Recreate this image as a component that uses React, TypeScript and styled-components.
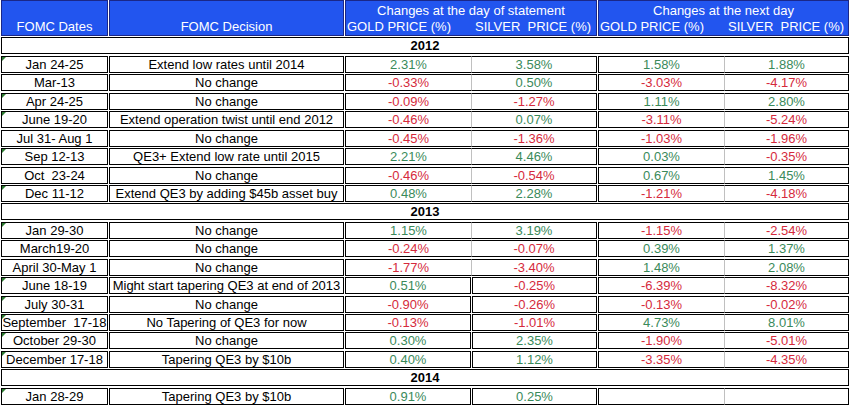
import React from "react";
import styled, { createGlobalStyle, css } from "styled-components";

const GlobalStyle = createGlobalStyle`
  *, *::before, *::after {
    box-sizing: border-box;
  }

  body {
    margin: 0;
    background: #ffffff;
    font-family: "Liberation Sans", Arial, sans-serif;
  }
`;

const Sheet = styled.div`
  display: flex;
  flex-direction: column;
  gap: 1.45px;
  width: 849px;
  padding-left: 1px;
  font-size: 13px;
  color: #000000;
`;

const HeaderRow = styled.div`
  display: grid;
  grid-template-columns: 107px 235px 252px 251px;
  column-gap: 1px;
  height: 36px;
`;

const HeaderBox = styled.div`
  display: flex;
  flex-direction: column;
  justify-content: flex-end;
  background: #2255ef;
  border: 1px solid #1a2788;
  color: #ffffff;
  line-height: 16px;
  text-align: center;
  white-space: pre;
`;

const HeaderPair = styled.div`
  display: grid;
  grid-template-columns: 126px 1fr;
  text-align: left;
`;

const HeaderLabel = styled.span<{ $pad: number }>`
  padding-left: ${(p) => p.$pad}px;
`;

const DataRow = styled.div`
  display: grid;
  grid-template-columns: 107px 235px 252px 251px;
  column-gap: 1px;
  height: 17px;
`;

const Cell = styled.div<{ $mark?: boolean }>`
  position: relative;
  border: 1px solid #000000;
  line-height: 15px;
  text-align: center;
  white-space: pre;
  overflow: hidden;

  ${(p) =>
    p.$mark &&
    css`
      &::before {
        content: "";
        position: absolute;
        top: 0;
        left: 0;
        border-top: 4px solid #2e7d32;
        border-right: 4px solid transparent;
      }
    `}
`;

const Pair = styled.div<{ $split: boolean; $left: number }>`
  display: grid;
  grid-template-columns: ${(p) => (p.$split ? `${p.$left - 1}px 1fr` : `${p.$left}px 1fr`)};
  column-gap: ${(p) => (p.$split ? 1 : 0)}px;
`;

const Value = styled.div<{ $tone: "up" | "down" | "none"; $first: boolean; $split: boolean }>`
  border: 1px solid #000000;
  line-height: 15px;
  text-align: center;
  color: ${(p) => (p.$tone === "up" ? "#3a8a5a" : p.$tone === "down" ? "#d52a3c" : "#000000")};

  ${(p) =>
    !p.$split &&
    (p.$first
      ? css`
          border-right-color: #c0c0c0;
        `
      : css`
          border-left: none;
        `)}
`;

const YearBanner = styled.div`
  height: 17px;
  border: 1px solid #000000;
  line-height: 15px;
  font-weight: bold;
  text-align: center;
`;

type Entry = {
  date: string;
  decision: string;
  values: string[];
  mark?: boolean;
  split?: boolean;
};

type Block = { year: string; rows: Entry[] };

const blocks: Block[] = [
  {
    year: "2012",
    rows: [
      { date: "Jan 24-25", decision: "Extend low rates until 2014", values: ["2.31%", "3.58%", "1.58%", "1.88%"], mark: true },
      { date: "Mar-13", decision: "No change", values: ["-0.33%", "0.50%", "-3.03%", "-4.17%"] },
      { date: "Apr 24-25", decision: "No change", values: ["-0.09%", "-1.27%", "1.11%", "2.80%"], mark: true },
      { date: "June 19-20", decision: "Extend operation twist until end 2012", values: ["-0.46%", "0.07%", "-3.11%", "-5.24%"], mark: true },
      { date: "Jul 31- Aug 1", decision: "No change", values: ["-0.45%", "-1.36%", "-1.03%", "-1.96%"] },
      { date: "Sep 12-13", decision: "QE3+ Extend low rate until 2015", values: ["2.21%", "4.46%", "0.03%", "-0.35%"], mark: true },
      { date: "Oct  23-24", decision: "No change", values: ["-0.46%", "-0.54%", "0.67%", "1.45%"] },
      { date: "Dec 11-12", decision: "Extend QE3 by adding $45b asset buy", values: ["0.48%", "2.28%", "-1.21%", "-4.18%"], mark: true },
    ],
  },
  {
    year: "2013",
    rows: [
      { date: "Jan 29-30", decision: "No change", values: ["1.15%", "3.19%", "-1.15%", "-2.54%"], mark: true },
      { date: "March19-20", decision: "No change", values: ["-0.24%", "-0.07%", "0.39%", "1.37%"] },
      { date: "April 30-May 1", decision: "No change", values: ["-1.77%", "-3.40%", "1.48%", "2.08%"] },
      { date: "June 18-19", decision: "Might start tapering QE3 at end of 2013", values: ["0.51%", "-0.25%", "-6.39%", "-8.32%"], mark: true, split: true },
      { date: "July 30-31", decision: "No change", values: ["-0.90%", "-0.26%", "-0.13%", "-0.02%"], mark: true, split: true },
      { date: "September  17-18", decision: "No Tapering of QE3 for now", values: ["-0.13%", "-1.01%", "4.73%", "8.01%"], mark: true, split: true },
      { date: "October 29-30", decision: "No change", values: ["0.30%", "2.35%", "-1.90%", "-5.01%"], mark: true, split: true },
      { date: "December 17-18", decision: "Tapering QE3 by $10b", values: ["0.40%", "1.12%", "-3.35%", "-4.35%"], mark: true, split: true },
    ],
  },
  {
    year: "2014",
    rows: [
      { date: "Jan 28-29", decision: "Tapering QE3 by $10b", values: ["0.91%", "0.25%", "", ""], mark: true, split: true },
    ],
  },
];

const toneOf = (v: string) => (v === "" ? "none" : v.startsWith("-") ? "down" : "up");

const ValuePair = ({ a, b, split, left }: { a: string; b: string; split: boolean; left: number }) => (
  <Pair $split={split} $left={left}>
    <Value $tone={toneOf(a)} $first $split={split}>
      {a}
    </Value>
    <Value $tone={toneOf(b)} $first={false} $split={split}>
      {b}
    </Value>
  </Pair>
);

const App = () => {
  return (
    <>
      <GlobalStyle />
      <Sheet>
        <HeaderRow>
          <HeaderBox>FOMC Dates</HeaderBox>
          <HeaderBox>FOMC Decision</HeaderBox>
          <HeaderBox>
            <span>Changes at the day of statement</span>
            <HeaderPair>
              <HeaderLabel $pad={1}>GOLD PRICE (%)</HeaderLabel>
              <HeaderLabel $pad={3}>SILVER  PRICE (%)</HeaderLabel>
            </HeaderPair>
          </HeaderBox>
          <HeaderBox>
            <span>Changes at the next day</span>
            <HeaderPair>
              <HeaderLabel $pad={1}>GOLD PRICE (%)</HeaderLabel>
              <HeaderLabel $pad={3}>SILVER  PRICE (%)</HeaderLabel>
            </HeaderPair>
          </HeaderBox>
        </HeaderRow>

        {blocks.map((block) => (
          <React.Fragment key={block.year}>
            <YearBanner>{block.year}</YearBanner>
            {block.rows.map((row) => (
              <DataRow key={row.date}>
                <Cell $mark={row.mark}>{row.date}</Cell>
                <Cell>{row.decision}</Cell>
                <ValuePair a={row.values[0]} b={row.values[1]} split={!!row.split} left={127} />
                <ValuePair a={row.values[2]} b={row.values[3]} split={false} left={127} />
              </DataRow>
            ))}
          </React.Fragment>
        ))}
      </Sheet>
    </>
  );
};

export default App;
